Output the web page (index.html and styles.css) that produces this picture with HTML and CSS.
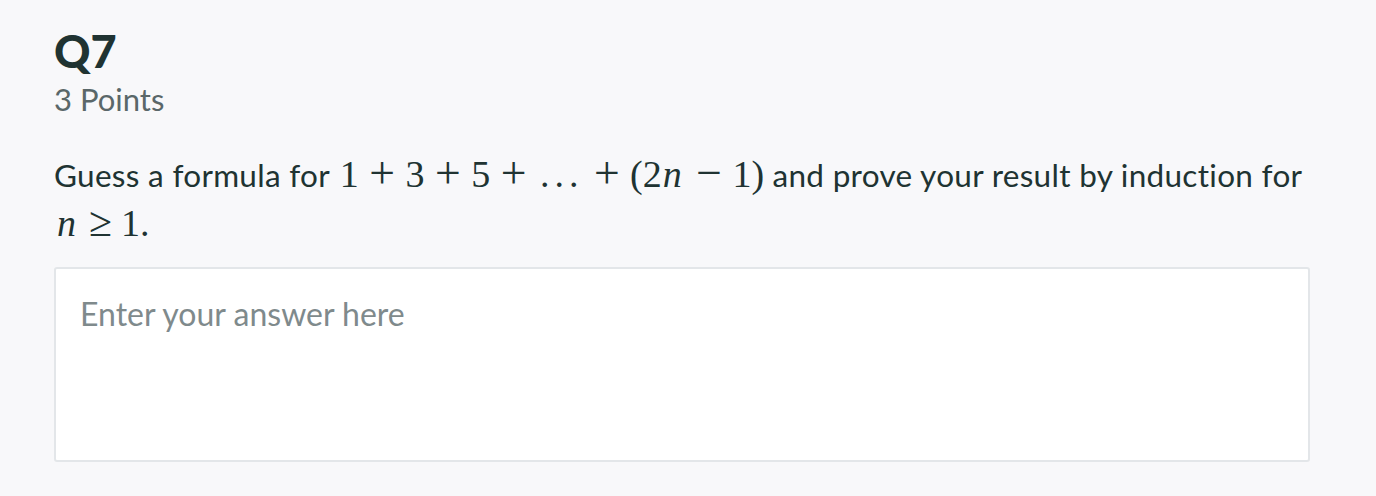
FILE: index.html
```html
<!DOCTYPE html>
<html>
<head>
<meta charset="utf-8">
<link rel="stylesheet" href="styles.css">
</head>
<body>
<div class="question">
  <h2 class="q-title">Q7</h2>
  <div class="q-points">3 Points</div>
  <p class="q-text">Guess a formula for <span class="math"><span class="num">1</span><span class="bin">+</span><span class="num">3</span><span class="bin">+</span><span class="num">5</span><span class="bin">+</span><span class="dots">...</span><span class="bin">+</span><span class="num">(2</span><i class="var">n</i><span class="bin">&minus;</span><span class="num">1)</span></span> and prove your result by induction for <span class="math"><i class="var">n</i><span class="rel">&ge;</span><span class="num">1.</span></span></p>
  <div class="answer"><span class="placeholder">Enter your answer here</span></div>
</div>
</body>
</html>
```
FILE: styles.css
```css
html, body {
  margin: 0;
  padding: 0;
  background: #f8f8fa;
}
body {
  font-family: Lato, "Noto Sans", sans-serif;
  font-variant-ligatures: none;
  color: #203332;
}
.question {
  padding: 26px 66px 34px 54px;
}
.q-title {
  margin: 0;
  font-size: 45px;
  font-weight: 900;
  line-height: 50px;
}
.q-points {
  margin-top: 5px;
  font-size: 31px;
  color: #5a6769;
  line-height: 36px;
}
.q-text {
  margin: 33px 0 18px;
  font-size: 31.5px;
  letter-spacing: 0.3px;
  line-height: 49px;
}
.math {
  font-family: "Liberation Serif", "DejaVu Serif", serif;
  font-size: 38px;
  line-height: 1;
  letter-spacing: 0;
  white-space: nowrap;
  margin-left: 2px;
}
.var {
  font-style: italic;
  margin: 0 4px 0 1px;
}
.bin {
  font-size: 1.2em;
  line-height: 1;
  margin: 0 10.5px;
  vertical-align: -1px;
}
.rel {
  font-size: 1.1em;
  margin: 0 9px;
}
.dots {
  letter-spacing: 5px;
  margin: 0 0 0 3px;
}
.answer {
  background: #fff;
  border: 2px solid #e3e6e9;
  border-radius: 3px;
  height: 195px;
  padding: 25px 24px;
  box-sizing: border-box;
}
.placeholder {
  font-size: 32px;
  line-height: 40px;
  color: #7f8a8c;
}
```
